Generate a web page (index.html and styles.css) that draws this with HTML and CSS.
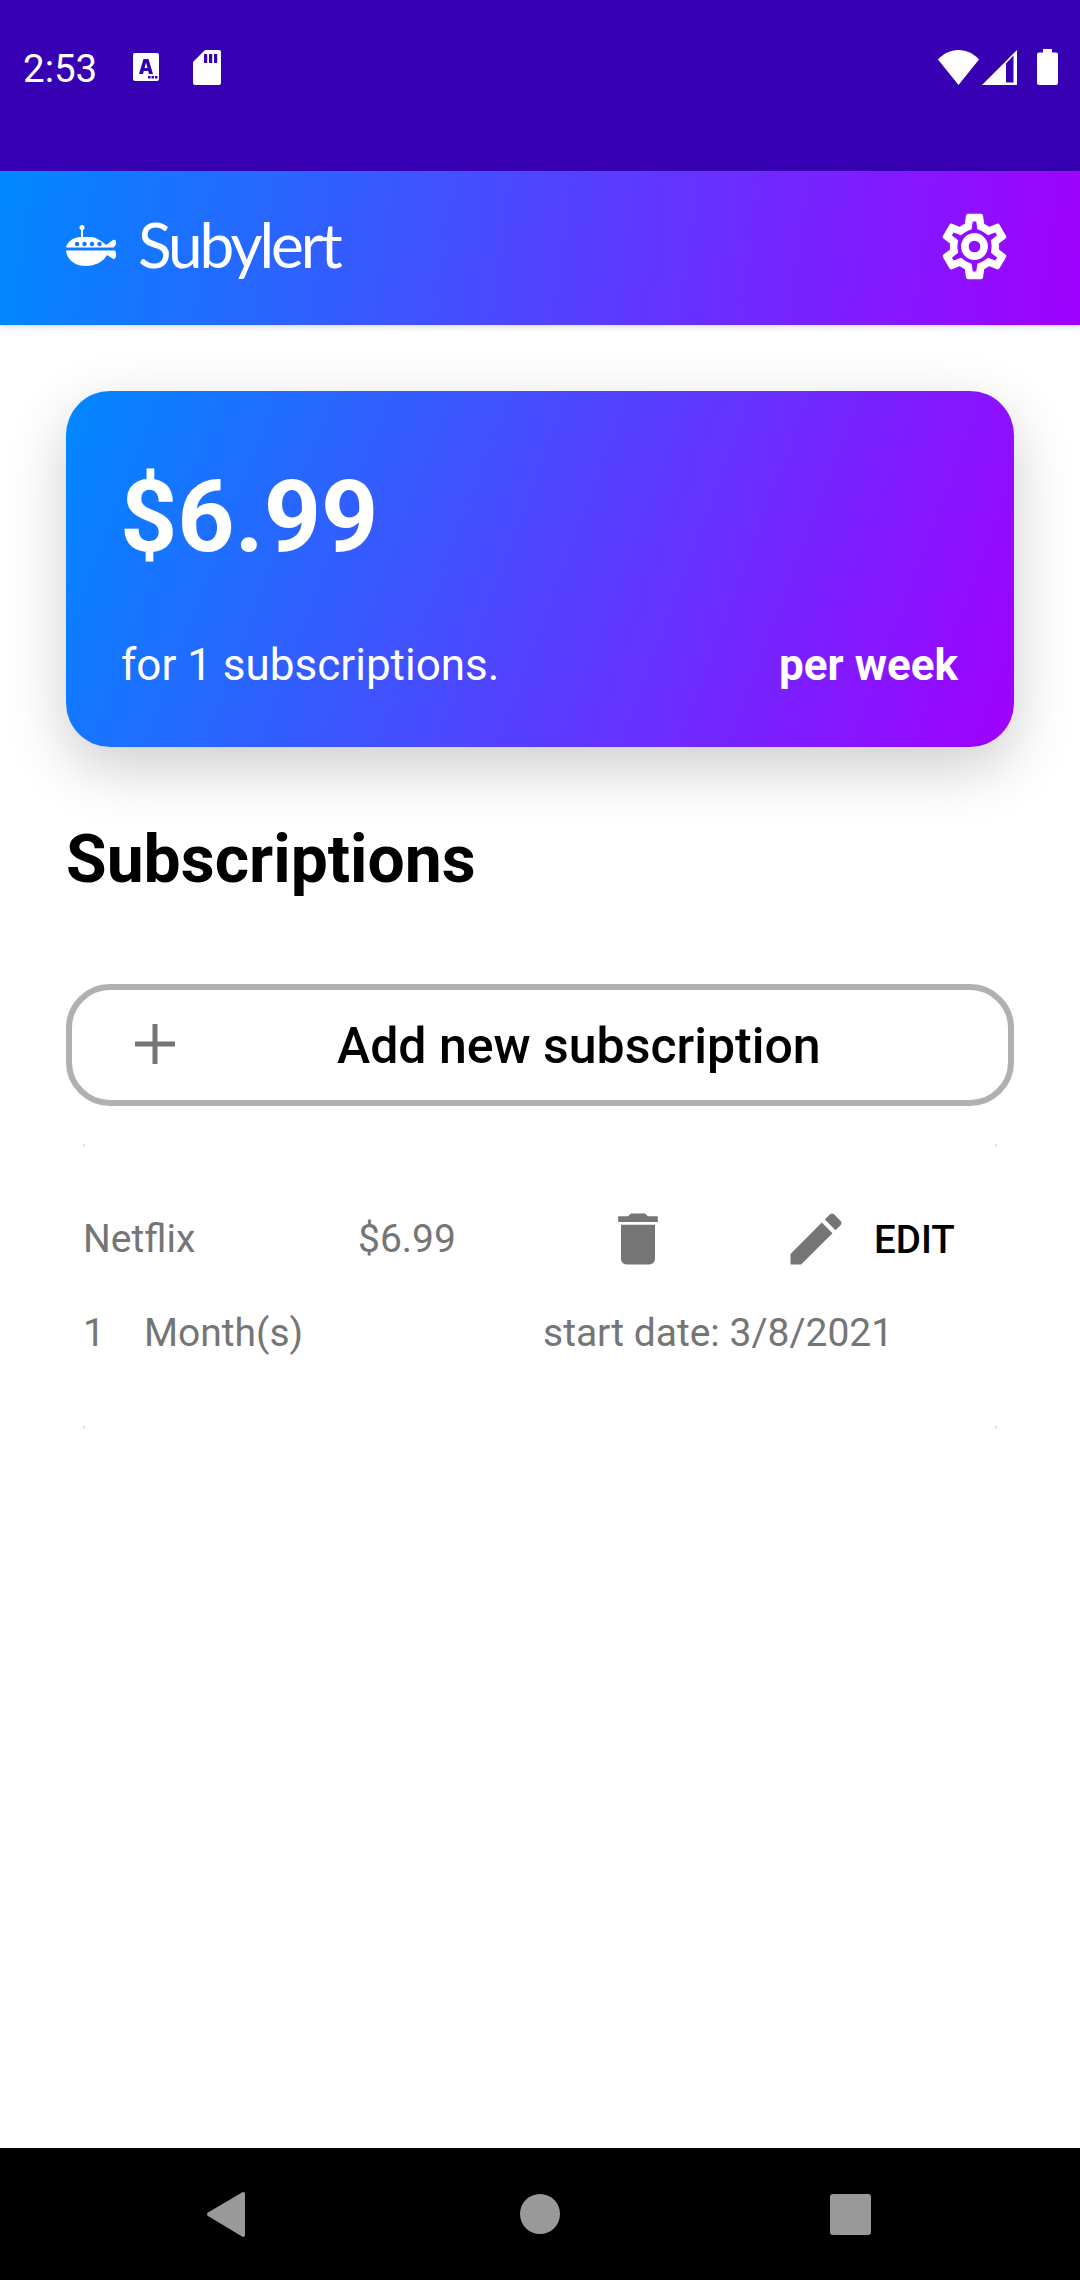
FILE: index.html
```html
<!DOCTYPE html>
<html>
<head>
	<meta charset="utf-8" />
	<title>Subylert</title>
	<link rel="stylesheet" href="styles.css">
</head>
<body>
	<div class="statusBar">
		<span class="clock">2:53</span>
		<svg class="iconA" viewBox="0 0 26 28">
			<path fill="#fff" d="M2 0h22a2 2 0 0 1 2 2v24a2 2 0 0 1-2 2H2a2 2 0 0 1-2-2V2a2 2 0 0 1 2-2z"/>
			<path fill="#3700b3" d="M10.500 6h5l4.500 15h-4l-.8-3h-4.400l-.8 3H6zM11.500 15h3L13 9.500zM15 23h2.500v2.500H15zM18.500 23H21v2.500h-2.500zM22 23h2.500v2.500H22z"/>
		</svg>
		<svg class="iconSd" viewBox="0 0 28 35">
			<path fill="#fff" d="M12 0h14a2 2 0 0 1 2 2v31a2 2 0 0 1-2 2H2a2 2 0 0 1-2-2V12z"/>
			<path fill="#3700b3" d="M11 4h3.200v9H11zM16 4h3.200v9H16zM21 4h3.200v9H21z"/>
		</svg>
		<span class="spacer"></span>
		<svg class="iconWifi" viewBox="0 0 41 35">
			<path fill="#fff" d="M20.500 35L0 9.500C5.500 3.500 12.500 0 20.500 0s15 3.500 20.500 9.500z"/>
		</svg>
		<svg class="iconSignal" viewBox="0 0 35 35">
			<path fill="#fff" fill-rule="evenodd" d="M35 0v35H0zM31.500 5.500L24 13.500V32.500h7.500z"/>
		</svg>
		<svg class="iconBattery" viewBox="0 0 21 36">
			<path fill="#fff" d="M6 0h9v3.500h4a2 2 0 0 1 2 2V34a2 2 0 0 1-2 2H2a2 2 0 0 1-2-2V5.500a2 2 0 0 1 2-2h4z"/>
		</svg>
	</div>

	<div class="appBar">
		<svg class="logoSub" viewBox="0 0 50 43">
			<circle fill="#fff" cx="16" cy="2.500" r="2.500"/>
			<path fill="#fff" d="M15 3h2v10h-2z"/>
			<path fill="#fff" d="M0 23C1 17 6 13 14 12h12c5 1 10 4 14 8l7-5c2-1 3 0 3 3 0 2-1 3-2.500 4.500H0zM0 25.500h44l5 0c1 1 1 3 1 5 0 3-2 4-3.500 3L41 30c-4 7-12 11-21 11C9 41 1 35 0 25.500z"/>
			<g fill="#0a7dff">
				<circle cx="11" cy="19" r="2.200"/>
				<circle cx="18.500" cy="19" r="2.200"/>
				<circle cx="26" cy="19" r="2.200"/>
				<circle cx="33.500" cy="19" r="2.200"/>
			</g>
		</svg>
		<span class="logoText">Subylert</span>
		<span class="spacer"></span>
		<svg class="iconGear" viewBox="0 0 24 24">
			<path fill="#fff" stroke="#fff" stroke-width=".35" d="M19.430 12.980c.04-.32.07-.64.07-.98 0-.34-.03-.66-.07-.98l2.110-1.650c.19-.15.24-.42.12-.64l-2-3.460c-.09-.16-.26-.25-.44-.25-.06 0-.12.01-.17.03l-2.490 1c-.52-.4-1.080-.73-1.690-.98l-.38-2.650C14.460 2.180 14.250 2 14 2h-4c-.25 0-.46.18-.49.42l-.38 2.650c-.61.25-1.170.59-1.690.98l-2.490-1c-.06-.02-.12-.03-.18-.03-.17 0-.34.09-.43.25l-2 3.460c-.13.22-.07.49.12.64l2.110 1.650c-.04.32-.07.65-.07.98 0 .33.03.66.07.98l-2.110 1.650c-.19.15-.24.42-.12.64l2 3.460c.09.16.26.25.44.25.06 0 .12-.01.17-.03l2.490-1c.52.4 1.080.73 1.690.98l.38 2.650c.03.24.24.42.49.42h4c.25 0 .46-.18.49-.42l.38-2.650c.61-.25 1.170-.59 1.690-.98l2.490 1c.06.02.12.03.18.03.17 0 .34-.09.43-.25l2-3.460c.12-.22.07-.49-.12-.64l-2.110-1.650zm-1.980-1.710c.04.31.05.52.05.73 0 .21-.02.43-.05.73l-.14 1.130.89.7 1.080.84-.7 1.210-1.270-.51-1.040-.42-.9.68c-.43.32-.84.56-1.250.73l-1.060.43-.16 1.130-.2 1.350h-1.400l-.19-1.350-.16-1.130-1.060-.43c-.43-.18-.83-.41-1.230-.71l-.91-.7-1.060.43-1.270.51-.7-1.210 1.080-.84.89-.7-.14-1.130c-.03-.31-.05-.54-.05-.74s.02-.43.05-.73l.14-1.130-.89-.7-1.080-.84.7-1.210 1.270.51 1.040.42.9-.68c.43-.32.84-.56 1.250-.73l1.060-.43.16-1.130.2-1.350h1.390l.19 1.350.16 1.130 1.060.43c.43.18.83.41 1.230.71l.91.7 1.060-.43 1.270-.51.7 1.210-1.070.85-.89.7.14 1.130zM12 8c-2.210 0-4 1.790-4 4s1.790 4 4 4 4-1.790 4-4-1.790-4-4-4zm0 6c-1.100 0-2-.9-2-2s.9-2 2-2 2 .9 2 2-.9 2-2 2z"/>
		</svg>
	</div>

	<div class="content">
		<div class="totalCard">
			<div class="totalPrice">$6.99</div>
			<div class="totalRow">
				<span class="totalCount">for 1 subscriptions.</span>
				<span class="totalPeriod">per week</span>
			</div>
		</div>

		<h1 class="heading">Subscriptions</h1>

		<div class="addButton">
			<svg class="iconPlus" viewBox="0 0 40 40">
				<path fill="#757575" d="M17.500 0h5v17.500H40v5H22.500V40h-5V22.500H0v-5h17.500z"/>
			</svg>
			<span class="addLabel">Add new subscription</span>
		</div>

		<div class="subItem">
			<div class="subRow">
				<span class="subName">Netflix</span>
				<span class="subPrice">$6.99</span>
				<svg class="iconTrash" viewBox="0 0 24 24">
					<path fill="#757575" d="M6 19c0 1.100.9 2 2 2h8c1.100 0 2-.9 2-2V7H6v12zM19 4h-3.500l-1-1h-5l-1 1H5v2h14V4z"/>
				</svg>
				<svg class="iconPencil" viewBox="0 0 24 24">
					<path fill="#757575" d="M3 17.250V21h3.750L17.810 9.940l-3.750-3.750L3 17.250zM20.710 7.040c.39-.39.39-1.020 0-1.410l-2.340-2.340c-.39-.39-1.020-.39-1.410 0l-1.830 1.830 3.750 3.750 1.830-1.830z"/>
				</svg>
				<span class="subEdit">EDIT</span>
			</div>
			<div class="subRow subRowSecond">
				<span class="subQty">1</span>
				<span class="subUnit">Month(s)</span>
				<span class="subDate">start date: 3/8/2021</span>
			</div>
		</div>
	</div>

	<div class="navBar">
		<svg class="navBack" viewBox="0 0 38 45">
			<path fill="#999" d="M35 .5c1.500-1 3 0 3 1.500v41c0 1.500-1.500 2.500-3 1.500L1 24c-1.300-1-1.300-2.500 0-3.500z"/>
		</svg>
		<span class="navHome"></span>
		<span class="navRecent"></span>
	</div>
</body>
</html>
```

FILE: styles.css
```css
html, body {
	margin: 0;
	padding: 0;
}
body {
	width: 1080px;
	height: 2280px;

	display: flex;
	flex-direction: column;

	background-color: #fff;
	font-family: 'Roboto', sans-serif;
	overflow: hidden;
}
.spacer {
	flex: 1;
}

/* status bar */
.statusBar {
	height: 171px;
	box-sizing: border-box;
	padding: 49px 22px 0 23px;

	display: flex;
	align-items: flex-start;

	background-color: #3700B3;
	color: #fff;
}
.clock {
	width: 110px;
	margin-top: -3px;
	font-size: 38.500px;
	line-height: 45px;
}
.iconA {
	width: 26px;
	height: 28px;
	margin: 4px 34px 0 0;
}
.iconSd {
	width: 28px;
	height: 35px;
	margin-top: 1px;
}
.iconWifi {
	width: 41px;
	height: 35px;
	margin: 1px 3px 0 0;
}
.iconSignal {
	width: 35px;
	height: 35px;
	margin: 1px 20px 0 0;
}
.iconBattery {
	width: 21px;
	height: 36px;
}

/* app bar */
.appBar {
	height: 154px;
	box-sizing: border-box;
	padding: 0 65px 0 66px;

	display: flex;
	align-items: center;

	background: linear-gradient(98deg, #0088FF, #A000FF);
	box-shadow: 0 2px 6px rgba(0,0,0,.15);
	position: relative;
}
.logoSub {
	width: 50px;
	height: 43px;
	margin: -4px 22px 0 0;
}
.logoText {
	margin-top: -8px;
	font-family: 'Lato', sans-serif;
	font-weight: 400;
	font-size: 62px;
	letter-spacing: -3px;
	line-height: 70px;
	color: #fff;
}
.iconGear {
	width: 77px;
	height: 77px;
	margin: -3px 2px 0 0;
}

/* main area */
.content {
	flex: 1;
	padding: 66px 66px 0;
}
.totalCard {
	height: 356px;
	box-sizing: border-box;
	padding: 70px 56px 0;

	border-radius: 44px;
	background: linear-gradient(110.600deg, #0088FF, #A000FF);
	box-shadow: 0 20px 60px rgba(0,0,0,.2);
	color: #fff;
}
.totalPrice {
	margin-left: -2px;
	font-size: 100px;
	font-weight: 700;
	line-height: 112px;
}
.totalRow {
	margin-top: 67px;
	display: flex;
	justify-content: space-between;
	font-size: 44px;
	line-height: 50px;
}
.totalCount {
	margin-left: -1px;
}
.totalPeriod {
	font-weight: 700;
}
.heading {
	margin: 75px 0 0;
	font-size: 66px;
	font-weight: 700;
	line-height: 76px;
	color: #000;
}
.addButton {
	height: 122px;
	box-sizing: border-box;
	margin-top: 86px;
	padding-left: 63px;

	display: flex;
	align-items: center;

	border: 6px solid #B0B0B0;
	border-radius: 44px;
}
.iconPlus {
	width: 40px;
	height: 40px;
	margin-top: -3px;
}
.addLabel {
	margin: 2px 0 0 162px;
	font-size: 50px;
	font-weight: 500;
	line-height: 56px;
	color: #000;
}

/* list item, only its corners show */
.subItem {
	height: 285px;
	box-sizing: border-box;
	margin: 38px 17px 0;
	padding-top: 61px;

	background-image:
		linear-gradient(#e4e4e4, #e4e4e4),
		linear-gradient(#e4e4e4, #e4e4e4),
		linear-gradient(#e4e4e4, #e4e4e4),
		linear-gradient(#e4e4e4, #e4e4e4);
	background-repeat: no-repeat;
	background-size: 2px 3px;
	background-position: left top, right top, left bottom, right bottom;

	font-size: 39px;
	color: #757575;
}
.subRow {
	height: 68px;
	display: flex;
	align-items: center;
}
.subRowSecond {
	margin-top: 26px;
}
.subName {
	width: 275px;
}
.subPrice {
	width: 246px;
}
.iconTrash {
	width: 68px;
	height: 68px;
	margin-right: 110px;
}
.iconPencil {
	width: 68px;
	height: 68px;
	margin-right: 24px;
}
.subEdit {
	font-size: 38.500px;
	font-weight: 500;
	color: #000;
}
.subQty {
	width: 61px;
}
.subUnit {
	width: 399px;
}

/* nav bar */
.navBar {
	height: 132px;
	flex-shrink: 0;
	padding-right: 2px;

	display: flex;
	align-items: center;
	justify-content: center;
	gap: 275px;

	background-color: #000;
}
.navBack {
	width: 38px;
	height: 45px;
}
.navHome {
	width: 40px;
	height: 40px;
	border-radius: 50%;
	background-color: #999;
}
.navRecent {
	width: 41px;
	height: 41px;
	margin-left: -5px;
	border-radius: 3px;
	background-color: #999;
}
```
